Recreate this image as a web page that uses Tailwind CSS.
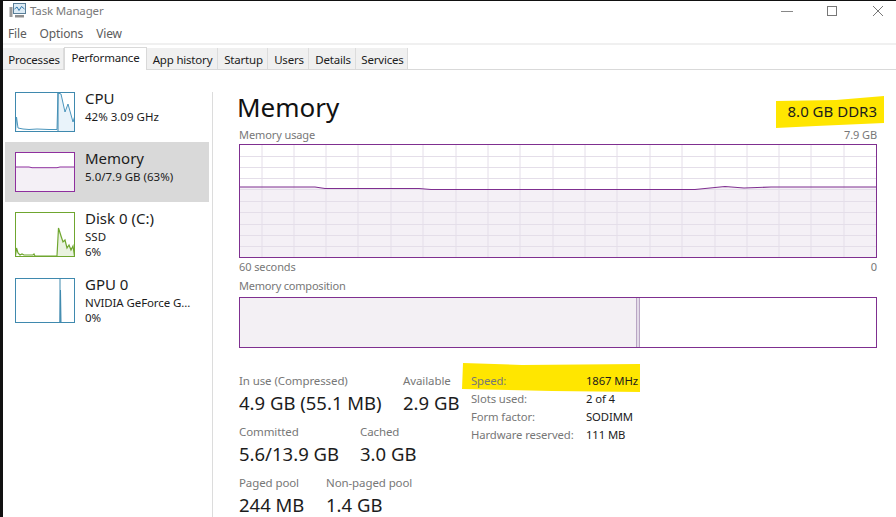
<!DOCTYPE html>
<html lang="en">
<head>
  <meta charset="UTF-8" />
  <title>Task Manager</title>
  <script src="https://cdn.jsdelivr.net/npm/@tailwindcss/browser@4"></script>
</head>
<body class="bg-black">
<div class="relative w-[896px] h-[517px] overflow-hidden bg-white pl-[3px] pt-px font-['Noto_Sans','Open_Sans',sans-serif] text-[12px] text-[#1c1c1c]">
  <div class="bg-white h-full w-full flex flex-col">

    <!-- title bar -->
    <div class="h-[24px] pb-[5px] flex items-center shrink-0">
      <svg class="ml-[6px] w-[17px] h-[17px]" viewBox="0 0 17 17">
        <rect x="0.5" y="5" width="3" height="10" fill="#9a9a9a"/>
        <rect x="4.5" y="1.5" width="12" height="10" fill="#dcebf5" stroke="#5a7f99"/>
        <path d="M5.5 7 L8 5 L10 8.5 L12.5 4.5 L15.5 7" fill="none" stroke="#2f78ad"/>
        <rect x="6" y="13" width="9" height="2.5" fill="#8f8f8f"/>
      </svg>
      <span class="ml-[4px] text-[#7a7a7a] text-[11.5px] tracking-[-0.15px]">Task Manager</span>
      <div class="ml-auto flex items-center text-[#777]">
        <svg class="w-[14px] h-[12px] mr-[32px]" viewBox="0 0 14 12"><path d="M1 6.5H13" stroke="#888" /></svg>
        <svg class="w-[12px] h-[12px] mr-[34px]" viewBox="0 0 12 12"><rect x="1.5" y="1.5" width="9" height="9" fill="none" stroke="#777"/></svg>
        <svg class="w-[12px] h-[12px] mr-[12px]" viewBox="0 0 12 12"><path d="M1 1L11 11M11 1L1 11" stroke="#777"/></svg>
      </div>
    </div>

    <!-- menu -->
    <div class="h-[18px] flex items-center gap-[13px] pl-[5px] text-[#5c5c5c] shrink-0 tracking-[-0.15px]">
      <span>File</span><span>Options</span><span>View</span>
    </div>
    <div class="h-[2px] bg-[#f0f0f0] shrink-0"></div>

    <!-- tabs -->
    <div class="relative h-[25px] flex items-end border-b border-[#d9d9d9] shrink-0 text-[11.5px]">
      <div class="w-[61px] h-[21px] pt-[2px] pl-[2px] bg-[#f0f0f0] border-r border-[#dcdcdc] flex items-center justify-center tracking-[-0.2px]">Processes</div>
      <div class="w-[83px] h-[23px] -mb-px bg-white border-x border-t border-[#d9d9d9] flex items-start pt-[1px] justify-center tracking-[-0.2px]">Performance</div>
      <div class="w-[71px] h-[21px] pt-[2px] pl-[1px] bg-[#f0f0f0] border-r border-[#dcdcdc] flex items-center justify-center tracking-[-0.2px]">App history</div>
      <div class="w-[50px] h-[21px] pt-[2px] pl-[2px] bg-[#f0f0f0] border-r border-[#dcdcdc] flex items-center justify-center tracking-[-0.2px]">Startup</div>
      <div class="w-[41px] h-[21px] pt-[2px] pl-[2px] bg-[#f0f0f0] border-r border-[#dcdcdc] flex items-center justify-center tracking-[-0.2px]">Users</div>
      <div class="w-[47px] h-[21px] pt-[2px] pl-[2px] bg-[#f0f0f0] border-r border-[#dcdcdc] flex items-center justify-center tracking-[-0.2px]">Details</div>
      <div class="w-[52px] h-[21px] pt-[2px] pl-[2px] bg-[#f0f0f0] border-r border-[#dcdcdc] flex items-center justify-center tracking-[-0.2px]">Services</div>
    </div>

    <div class="flex flex-1 min-h-0">
      <!-- sidebar -->
      <div class="w-[209px] shrink-0 pt-[12px] pl-[2px] leading-[15px] text-[11.5px]">
        <div class="w-[204px] h-[60px] flex pl-[10px] pt-[10px]">
          <svg class="w-[60px] h-[40px] shrink-0" viewBox="0 0 60 40">
            <path d="M43 39V1L46 2L50 20L53 12L58 30L59.5 25V39Z" fill="#e9f3fa"/>
            <path d="M0.5 39L1.5 25L3 36L8 37L14 37.5L22 37L34 37.5L42 37.5L43 1L46 2L50 20L53 12L58 30L59.5 25" fill="none" stroke="#4b96bd"/>
            <path d="M43 1V39" stroke="#3f89ae"/>
            <rect x="0.5" y="0.5" width="59" height="39" fill="none" stroke="#3f89ae"/>
          </svg>
          <div class="ml-[10px]">
            <div class="text-[15px] leading-[18px] -mt-[3px] mb-[2px]">CPU</div>
            <div>42% 3.09 GHz</div>
          </div>
        </div>
        <div class="w-[204px] h-[60px] flex pl-[10px] pt-[10px] bg-[#d9d9d9]">
          <svg class="w-[60px] h-[40px] shrink-0" viewBox="0 0 60 40">
            <rect x="0.5" y="0.5" width="59" height="39" fill="#fff"/>
            <path d="M0.5 15H14L17 15.7H42L45 15H59.5V39.5H0.5Z" fill="#f4f0f6"/>
            <path d="M0.5 15H14L17 15.7H42L45 15H59.5" fill="none" stroke="#8e2f9e"/>
            <rect x="0.5" y="0.5" width="59" height="39" fill="none" stroke="#8e2f9e"/>
          </svg>
          <div class="ml-[10px]">
            <div class="text-[15px] leading-[18px] -mt-[3px] mb-[2px]">Memory</div>
            <div>5.0/7.9 GB (63%)</div>
          </div>
        </div>
        <div class="w-[204px] h-[66px] flex pl-[10px] pt-[10px]">
          <svg class="w-[60px] h-[45px] shrink-0" viewBox="0 0 60 45">
            <path d="M43 44L43.5 16L46 24L48 30L50 28L52 36L54 33L56 38L58 34L59.5 44Z" fill="#e9f2df"/>
            <path d="M0.5 44L1.5 36L3 41L5 43L7 42L9 43L18 43L19 42L20 44H42L43.5 16L46 24L48 30L50 28L52 36L54 33L56 38L58 34L59.5 44" fill="none" stroke="#6fa62f" stroke-width="1.2"/>
            <rect x="0.5" y="0.5" width="59" height="44" fill="none" stroke="#6fa62f"/>
          </svg>
          <div class="ml-[10px]">
            <div class="text-[15px] leading-[18px] -mt-[3px] mb-[2px]">Disk 0 (C:)</div>
            <div>SSD</div>
            <div>6%</div>
          </div>
        </div>
        <div class="w-[204px] h-[60px] flex pl-[10px] pt-[10px]">
          <svg class="w-[60px] h-[45px] shrink-0" viewBox="0 0 60 45">
            <path d="M45 44L45.5 12L46 44" fill="#9cc7dd" stroke="#3f89ae"/>
            <rect x="0.5" y="0.5" width="59" height="44" fill="none" stroke="#3f89ae"/>
            <path d="M45 1V44" stroke="#3f89ae"/>
          </svg>
          <div class="ml-[10px]">
            <div class="text-[15px] leading-[18px] -mt-[3px] mb-[2px]">GPU 0</div>
            <div class="tracking-[-0.1px]">NVIDIA GeForce G...</div>
            <div>0%</div>
          </div>
        </div>
      </div>
      <div class="w-px mt-[22px] bg-[#dcdcdc] shrink-0"></div>

      <!-- main panel -->
      <div class="relative w-[638px] ml-[26px] shrink-0">
        <svg class="absolute left-[537px] top-[26px] w-[108px] h-[32px]" viewBox="0 0 108 32">
          <path d="M0 5L60 4L108 0V27L40 30L0 32Z" fill="#ffe600"/>
        </svg>
        <svg class="absolute left-[223px] top-[293px] w-[178px] h-[30px]" viewBox="0 0 178 30">
          <path d="M1 0L60 2L178 1V29L90 28L0 26Z" fill="#ffe600"/>
        </svg>

        <div class="relative h-[56px] flex items-start justify-between">
          <div class="text-[26px] leading-[36px] -ml-[2px] mt-[19px] text-[#111]">Memory</div>
          <div class="text-[15px] leading-[20px] mt-[31px]">8.0 GB DDR3</div>
        </div>
        <div class="relative h-[18px] flex justify-between items-center text-[11px] tracking-[-0.1px] text-[#777]">
          <span>Memory usage</span><span>7.9 GB</span>
        </div>
        <svg class="block w-[638px] h-[114px]" viewBox="0 0 638 114">
          <path d="M0.5 43H76L86 44.5H180L192 45.5H456L486 42.5L505 44L532 43H637.5V113.5H0.5Z" fill="#f4f0f6"/>
          <path fill="none" stroke="#e4dee9" d="M23 0V114M55 0V114M87 0V114M119 0V114M152 0V114M184 0V114M217 0V114M249 0V114M281 0V114M314 0V114M346 0V114M378 0V114M411 0V114M443 0V114M476 0V114M508 0V114M540 0V114M572 0V114M605 0V114M0 12.5H638M0 23.5H638M0 34.5H638M0 45.5H638M0 57.5H638M0 68.5H638M0 80.5H638M0 91.5H638M0 102.5H638"/>
          <path d="M0.5 43H76L86 44.5H180L192 45.5H456L486 42.5L505 44L532 43H637.5" fill="none" stroke="#7f2f90" stroke-width="1.2"/>
          <rect x="0.5" y="0.5" width="637" height="113" fill="none" stroke="#7f2f90"/>
        </svg>
        <div class="relative h-[19px] flex justify-between items-center text-[11px] tracking-[-0.1px] text-[#777]">
          <span>60 seconds</span><span>0</span>
        </div>
        <div class="relative h-[20px] pb-[2px] flex items-center text-[11px] tracking-[-0.2px] text-[#777]">Memory composition</div>
        <div class="relative h-[51px] flex border border-[#7f2f90]">
          <div class="w-[396px] bg-[#f3f0f4]"></div>
          <div class="w-[4px] bg-[#e3dbe8] border-x border-[#b9a6c4]"></div>
        </div>

        <div class="relative flex mt-[24px]">
          <div class="w-[232px]">
            <div class="flex">
              <div class="w-[164px]"><div class="text-[11.5px] tracking-[-0.1px] leading-[18px] text-[#777]">In use (Compressed)</div><div class="text-[18.5px] leading-[28px] -mt-[1px]">4.9 GB (55.1 MB)</div></div>
              <div><div class="text-[11.5px] tracking-[-0.1px] leading-[18px] text-[#777]">Available</div><div class="text-[18.5px] leading-[28px] -mt-[1px]">2.9 GB</div></div>
            </div>
            <div class="flex mt-[6px]">
              <div class="w-[121px]"><div class="text-[11.5px] tracking-[-0.1px] leading-[18px] text-[#777]">Committed</div><div class="text-[18.5px] leading-[28px] -mt-[1px]">5.6/13.9 GB</div></div>
              <div><div class="text-[11.5px] tracking-[-0.1px] leading-[18px] text-[#777]">Cached</div><div class="text-[18.5px] leading-[28px] -mt-[1px]">3.0 GB</div></div>
            </div>
            <div class="flex mt-[6px]">
              <div class="w-[87px]"><div class="text-[11.5px] tracking-[-0.1px] leading-[18px] text-[#777]">Paged pool</div><div class="text-[18.5px] leading-[28px] -mt-[1px]">244 MB</div></div>
              <div><div class="text-[11.5px] tracking-[-0.1px] leading-[18px] text-[#777]">Non-paged pool</div><div class="text-[18.5px] leading-[28px] -mt-[1px]">1.4 GB</div></div>
            </div>
          </div>
          <div class="grid grid-cols-[115px_auto] auto-rows-[18px] items-center text-[11.3px] tracking-[-0.1px]">
            <span class="text-[#777]">Speed:</span><span>1867 MHz</span>
            <span class="text-[#777]">Slots used:</span><span>2 of 4</span>
            <span class="text-[#777]">Form factor:</span><span>SODIMM</span>
            <span class="text-[#777]">Hardware reserved:</span><span>111 MB</span>
          </div>
        </div>
      </div>
    </div>
  </div>
  <div class="absolute left-0 top-0 w-full h-px bg-[#111]"></div>
  <div class="absolute left-0 top-0 w-[3px] h-full bg-[#111]"></div>
</div>
</body>
</html>
